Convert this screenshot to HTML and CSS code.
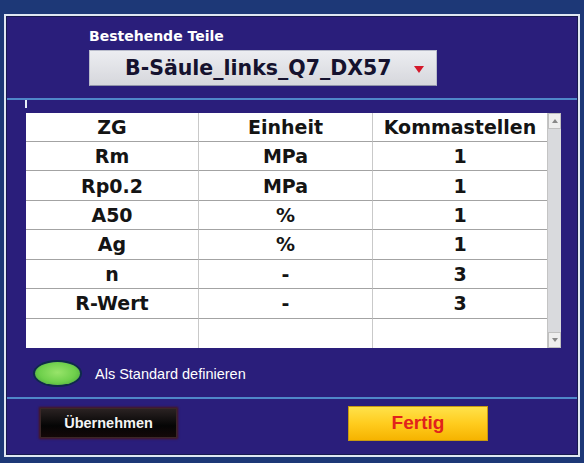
FILE: index.html
```html
<!DOCTYPE html>
<html lang="de">
<head>
<meta charset="utf-8">
<title>Bestehende Teile</title>
<link rel="stylesheet" href="styles.css">
</head>
<body>
<div class="frame">
  <div class="top">
    <div class="label">Bestehende Teile</div>
    <div class="dropdown">
      <span class="dd-text">B-Säule_links_Q7_DX57</span>
      <svg class="dd-arrow" width="10" height="7" viewBox="0 0 10 7"><polygon points="0,0 10,0 5,7" fill="#d4182a"/></svg>
    </div>
  </div>
  <div class="sep"></div>
  <div class="tick"></div>
  <div class="table-wrap">
    <div class="grid">
      <div class="cell h">ZG</div><div class="cell h">Einheit</div><div class="cell h">Kommastellen</div>
      <div class="cell">Rm</div><div class="cell">MPa</div><div class="cell">1</div>
      <div class="cell">Rp0.2</div><div class="cell">MPa</div><div class="cell">1</div>
      <div class="cell">A50</div><div class="cell">%</div><div class="cell">1</div>
      <div class="cell">Ag</div><div class="cell">%</div><div class="cell">1</div>
      <div class="cell">n</div><div class="cell">-</div><div class="cell">3</div>
      <div class="cell">R-Wert</div><div class="cell">-</div><div class="cell">3</div>
      <div class="cell last"></div><div class="cell last"></div><div class="cell last"></div>
    </div>
    <div class="scroll">
      <div class="sb-btn"><svg width="6" height="4" viewBox="0 0 6 4"><polygon points="0,4 6,4 3,0" fill="#888"/></svg></div>
      <div class="sb-track"></div>
      <div class="sb-btn"><svg width="6" height="4" viewBox="0 0 6 4"><polygon points="0,0 6,0 3,4" fill="#888"/></svg></div>
    </div>
  </div>
  <div class="std">
    <div class="oval"></div>
    <span class="std-text">Als Standard definieren</span>
  </div>
  <div class="sep sep2"></div>
  <div class="buttons">
    <div class="btn-dark">Übernehmen</div>
    <div class="btn-yellow">Fertig</div>
  </div>
</div>
</body>
</html>
```

FILE: styles.css
```css
html, body {
  margin: 0;
  padding: 0;
}
body {
  width: 584px;
  height: 463px;
  overflow: hidden;
  background: #1d3877;
}
.frame {
  margin: 14px 4px 0 4px;
  height: 439px;
  border: 2px solid #dfe7f2;
  box-shadow: inset 0 0 0 1px #17194e;
  background: #2a1e7b;
  display: flex;
  flex-direction: column;
}
.top {
  padding: 12px 0 0 83px;
}
.label {
  font-family: "DejaVu Sans", sans-serif;
  font-weight: bold;
  font-size: 14px;
  line-height: 16px;
  color: #ffffff;
}
.dropdown {
  margin-top: 6px;
  width: 348px;
  height: 36px;
  box-sizing: border-box;
  background: linear-gradient(#ecedf1, #d6d7dc);
  border: 1px solid #b9bccb;
  border-bottom-color: #8f93a8;
  display: flex;
  align-items: center;
  padding-left: 35px;
  padding-right: 12px;
}
.dd-text {
  flex: 1;
  font-family: "DejaVu Sans", sans-serif;
  font-weight: bold;
  font-size: 20.5px;
  color: #15122e;
}
.dd-arrow {
  margin-top: 2px;
}
.sep {
  margin-top: 12px;
  height: 2px;
  background: #4f87c9;
  margin-left: 1px;
  margin-right: 1px;
}
.tick {
  margin-left: 19px;
  width: 2px;
  height: 8px;
  background: #e8eef8;
}
.table-wrap {
  margin: 5px 0 0 20px;
  width: 535px;
  height: 235px;
  display: flex;
  background: #ffffff;
}
.grid {
  width: 521px;
  display: grid;
  grid-template-columns: 173px 174px 174px;
  grid-template-rows: 29px repeat(7, 1fr);
}
.cell {
  font-family: "DejaVu Sans", sans-serif;
  font-weight: bold;
  font-size: 19px;
  color: #141414;
  display: flex;
  align-items: center;
  justify-content: center;
  border-bottom: 1px solid #a3a3a3;
  border-right: 1px solid #c9c9c9;
}
.cell:nth-child(3n) {
  border-right: none;
}
.cell.last {
  border-bottom: none;
}
.scroll {
  width: 14px;
  display: flex;
  flex-direction: column;
  background: #d9dadd;
  border-left: 1px solid #c4c4c4;
  box-sizing: border-box;
}
.sb-btn {
  height: 14px;
  display: flex;
  align-items: center;
  justify-content: center;
  background: #eeeeee;
  border: 1px solid #c0c0c0;
}
.sb-track {
  flex: 1;
}
.std {
  margin-top: 14px;
  padding-left: 29px;
  display: flex;
  align-items: center;
  height: 23px;
}
.oval {
  width: 45px;
  height: 23px;
  border-radius: 50%;
  background: radial-gradient(ellipse at 50% 45%, #98e46a 0%, #6fd04c 55%, #3f9e35 100%);
  box-shadow: 0 0 0 2px #0e2b4a;
}
.std-text {
  margin-left: 15px;
  font-family: "Liberation Sans", sans-serif;
  font-size: 14.5px;
  color: #ffffff;
}
.sep2 {
  margin-top: 12px;
}
.buttons {
  flex: 1;
  display: flex;
  align-items: center;
  padding: 0 0 8px 34px;
}
.btn-dark {
  width: 137px;
  height: 30px;
  box-sizing: border-box;
  background: linear-gradient(#2a2222, #050505 60%, #140808);
  border: 1px solid #3b2727;
  box-shadow: 0 0 2px 1px #4a1616;
  display: flex;
  align-items: center;
  justify-content: center;
  font-family: "Liberation Sans", sans-serif;
  font-weight: bold;
  font-size: 14.5px;
  color: #f4f4f4;
}
.btn-yellow {
  margin-left: 171px;
  width: 140px;
  height: 35px;
  box-sizing: border-box;
  background: linear-gradient(#ffe24a, #ffcc1e 50%, #f6b300);
  border: 1px solid #c89a10;
  display: flex;
  align-items: center;
  justify-content: center;
  font-family: "Liberation Sans", sans-serif;
  font-weight: bold;
  font-size: 19px;
  color: #e1221c;
}
```
